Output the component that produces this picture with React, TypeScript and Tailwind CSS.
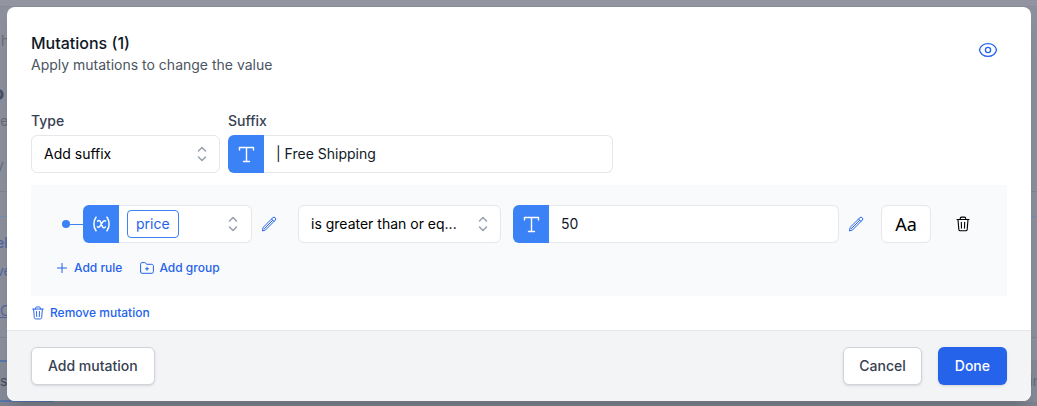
import type { ReactNode } from 'react';

interface IconProps {
  className?: string;
}

const TextIcon = ({ className = '' }: IconProps) => (
  <svg className={className} viewBox="0 0 18 18" fill="none" stroke="currentColor" strokeWidth={1.4} strokeLinecap="round" strokeLinejoin="round">
    <path d="M2.5 5V2.5h14V5M9.5 2.5v14M6.5 16.5h6" />
  </svg>
);

const VariableIcon = ({ className = '' }: IconProps) => (
  <svg className={className} viewBox="0 0 18 18" fill="none" stroke="currentColor" strokeWidth={1.5} strokeLinecap="round" strokeLinejoin="round">
    <path d="M4 2.2C1.2 6 1.2 12 4 15.8M15 2.2c2.8 3.8 2.8 9.8 0 13.6" />
    <path d="M5.6 6.1c1.3-.9 2.5-.6 3 .8l1.8 4.6c.5 1.4 1.8 1.6 3 .5M13.6 6c-1.2-.5-2.2 0-3 1.2l-2.3 3.6c-.8 1.3-1.7 1.7-2.9 1.1" />
  </svg>
);

const SelectorIcon = ({ className = '' }: IconProps) => (
  <svg className={className} viewBox="0 0 20 20" fill="none" stroke="currentColor" strokeWidth={1.6} strokeLinecap="round" strokeLinejoin="round">
    <path d="M6.5 7L10 3.5 13.5 7M6.5 13l3.5 3.5 3.5-3.5" />
  </svg>
);

const PencilIcon = ({ className = '' }: IconProps) => (
  <svg className={className} viewBox="0 0 16 16" fill="none" stroke="currentColor" strokeWidth={1} strokeLinecap="round" strokeLinejoin="round">
    <path d="M1.5 14.5l.7-3.2L11.9 1.7a1.7 1.7 0 0 1 2.4 2.4L4.7 13.8zM10.6 3l2.4 2.4M11.6 4.4L3.4 12.6" />
  </svg>
);

const TrashIcon = ({ className = '' }: IconProps) => (
  <svg className={className} viewBox="0 0 16 16" fill="none" stroke="currentColor" strokeWidth={1.1} strokeLinecap="round" strokeLinejoin="round">
    <path d="M2 3.5h12M5.3 3.5V2.3c0-.7.5-1.2 1.2-1.2h3c.7 0 1.2.5 1.2 1.2v1.2M3 3.5l.8 9.9c.1.8.7 1.4 1.5 1.4h5.4c.8 0 1.4-.6 1.5-1.4l.8-9.9M6.3 6.3l.2 5.8M9.7 6.3l-.2 5.8" />
  </svg>
);

const EyeIcon = ({ className = '' }: IconProps) => (
  <svg className={className} viewBox="0 0 20 20" fill="none" stroke="currentColor" strokeWidth={1.3}>
    <path d="M1.4 10C2.6 6 5.9 3.6 10 3.6S17.4 6 18.6 10c-1.2 4-4.5 6.4-8.6 6.4S2.6 14 1.4 10z" />
    <circle cx="10" cy="10" r="2.6" />
  </svg>
);

const PlusIcon = ({ className = '' }: IconProps) => (
  <svg className={className} viewBox="0 0 14 14" fill="none" stroke="currentColor" strokeWidth={1}>
    <path d="M7 2v10M2 7h10" />
  </svg>
);

const FolderPlusIcon = ({ className = '' }: IconProps) => (
  <svg className={className} viewBox="0 0 14 14" fill="none" stroke="currentColor" strokeWidth={1} strokeLinecap="round" strokeLinejoin="round">
    <path d="M.6 10.8V3.1c0-.8.6-1.5 1.4-1.5h2.7c.4 0 .8.2 1.1.5l.8 1.2h5.3c.8 0 1.5.7 1.5 1.5v6c0 .8-.7 1.5-1.5 1.5H2c-.8 0-1.4-.7-1.4-1.5zM7 6.2v3.2M5.4 7.8h3.2" />
  </svg>
);

interface SelectFieldProps {
  id: string;
  label?: string;
  value: string;
  className: string;
}

const SelectField = ({ id, label, value, className }: SelectFieldProps) => (
  <div className={`grid items-center ${className}`}>
    <select
      id={id}
      aria-label={label}
      className="col-start-1 row-start-1 h-[38px] w-full appearance-none rounded-md border border-[#e5e7eb] bg-white pl-3 pr-9 text-sm text-black"
    >
      <option>{value}</option>
    </select>
    <SelectorIcon className="pointer-events-none col-start-1 row-start-1 mr-2 h-5 w-5 justify-self-end text-[#9ca3af]" />
  </div>
);

interface TextFieldProps {
  id: string;
  label?: string;
  value: string;
  className: string;
}

const TextField = ({ id, label, value, className }: TextFieldProps) => (
  <div className={`flex h-[38px] ${className}`}>
    <span className="flex w-9 shrink-0 items-center justify-center rounded-l-md bg-[#3b82f6] text-white">
      <TextIcon className="h-[18px] w-[18px]" />
    </span>
    <input
      id={id}
      type="text"
      aria-label={label}
      defaultValue={value}
      className="min-w-0 flex-1 rounded-r-md border border-l-0 border-[#e5e7eb] bg-white px-3 text-sm text-[#111827]"
    />
  </div>
);

interface LinkButtonProps {
  icon: ReactNode;
  children: ReactNode;
}

const LinkButton = ({ icon, children }: LinkButtonProps) => (
  <button type="button" className="flex items-center gap-[5px] text-xs font-medium text-[#2563eb]">
    {icon}
    {children}
  </button>
);

// Page that stays visible around the edges of the dialog
const PageBehind = () => (
  <div aria-hidden="true" className="absolute inset-0 overflow-hidden bg-[#9294a0] text-sm text-[#666b7a]">
    <div className="h-[7px] border-b border-[#898c98]" />
    <div className="flex h-[184px] flex-col bg-[#8b909c]">
      <span className="mt-6 pl-px leading-5">h</span>
      <span className="-ml-2 mt-7 text-xl font-bold leading-7 text-[#4a5060]">o</span>
      <span className="-ml-2 mt-1 leading-5">ee</span>
      <span className="-ml-1 mt-6 leading-5">y</span>
    </div>
    <div className="h-[26px] border-y border-t-[#7f8491] border-b-[#758db3] bg-[#8b909c]" />
    <div className="flex h-[121px] flex-col border-b border-[#7f8491] bg-[#8b909c] text-[#5365a0]">
      <span className="-ml-1 mt-4 font-medium leading-5">el</span>
      <span className="-ml-1 mt-2 leading-5">ve</span>
      <span className="mt-5 leading-5 underline">C</span>
    </div>
    <div className="h-[22px] bg-[#8b909c]" />
    <div className="flex h-[42px] items-center justify-between bg-[#858a97]">
      <span className="flex h-full w-[54px] items-center border-y-2 border-[#5a74ab] text-[#454b5a]">s</span>
      <span className="-mr-1">in</span>
    </div>
    <div className="h-5 bg-[#7e848f]" />
  </div>
);

const MutationRule = () => (
  <div className="flex items-center">
    <span className="ml-[31px] h-2 w-2 rounded-full bg-[#3b82f6]" />
    <span className="h-px w-[13px] bg-[#3b82f6]" />
    <button
      type="button"
      aria-haspopup="listbox"
      className="flex h-[38px] w-[169px] items-center rounded-md border border-l-0 border-[#e5e7eb] bg-white pr-2"
    >
      <span className="-my-px flex h-[38px] w-9 shrink-0 items-center justify-center rounded-l-md bg-[#3b82f6] text-white">
        <VariableIcon className="h-[18px] w-[18px]" />
      </span>
      <span className="ml-2 rounded border border-[#3b82f6] px-2 py-0.5 text-sm leading-[22px] text-[#2563eb]">price</span>
      <SelectorIcon className="ml-auto h-5 w-5 text-[#9ca3af]" />
    </button>
    <button type="button" aria-label="Edit variable" className="ml-[9px] text-[#2563eb]">
      <PencilIcon className="h-4 w-4" />
    </button>
    <SelectField id="operator" label="Operator" value="is greater than or eq..." className="ml-[21px] w-[203px]" />
    <TextField id="amount" label="Value" value="50" className="ml-3 min-w-0 flex-1" />
    <button type="button" aria-label="Edit value" className="ml-[9px] text-[#2563eb]">
      <PencilIcon className="h-4 w-4" />
    </button>
    <button
      type="button"
      aria-label="Match case"
      className="ml-[17px] h-[38px] w-[50px] rounded-md border border-[#e5e7eb] bg-white font-['Noto_Sans',sans-serif] text-lg text-black"
    >
      Aa
    </button>
    <button type="button" aria-label="Remove rule" className="ml-6 mr-9 text-black">
      <TrashIcon className="h-4 w-4" />
    </button>
  </div>
);

export default function App() {
  return (
    <div className="relative min-h-screen p-[7px] pr-1.5 font-['Inter',sans-serif]">
      <PageBehind />
      <div role="dialog" aria-labelledby="dialog-title" className="relative overflow-hidden rounded-lg bg-white shadow-xl">
        <header className="flex items-start justify-between px-6 pt-6">
          <div>
            <h2 id="dialog-title" className="text-base font-medium text-[#111827]">Mutations (1)</h2>
            <p className="text-sm text-[#4b5563]">Apply mutations to change the value</p>
          </div>
          <button type="button" aria-label="Preview" className="mr-[9px] mt-[9px] text-[#2563eb]">
            <EyeIcon className="h-5 w-5" />
          </button>
        </header>

        <main className="px-6 pb-[9px] pt-9">
          <div className="flex gap-2">
            <div className="w-[189px]">
              <label htmlFor="type" className="mb-1 block text-sm font-medium text-[#374151]">Type</label>
              <SelectField id="type" value="Add suffix" className="w-full" />
            </div>
            <div className="w-[385px]">
              <label htmlFor="suffix" className="mb-1 block text-sm font-medium text-[#374151]">Suffix</label>
              <TextField id="suffix" value="| Free Shipping" className="w-full" />
            </div>
          </div>

          <section className="mt-3 bg-[#f9fafb] py-5">
            <MutationRule />
            <div className="ml-6 mt-[17px] flex gap-[18px]">
              <LinkButton icon={<PlusIcon className="h-3.5 w-3.5" />}>Add rule</LinkButton>
              <LinkButton icon={<FolderPlusIcon className="h-3.5 w-3.5" />}>Add group</LinkButton>
            </div>
          </section>

          <div className="mt-[9px]">
            <LinkButton icon={<TrashIcon className="h-3.5 w-3.5" />}>Remove mutation</LinkButton>
          </div>
        </main>

        <footer className="flex items-center gap-4 border-t border-[#e5e7eb] bg-[#f3f4f6] px-6 py-4">
          <button type="button" className="mr-auto h-[38px] rounded-md border border-[#d1d5db] bg-white px-4 text-sm font-medium text-[#374151] shadow-sm">
            Add mutation
          </button>
          <button type="button" className="h-[38px] rounded-md border border-[#d1d5db] bg-white px-[15px] text-sm font-medium text-[#374151] shadow-sm">
            Cancel
          </button>
          <button type="button" className="h-[38px] rounded-md border border-transparent bg-[#2563eb] px-4 text-sm font-medium text-white shadow-sm">
            Done
          </button>
        </footer>
      </div>
    </div>
  );
}
